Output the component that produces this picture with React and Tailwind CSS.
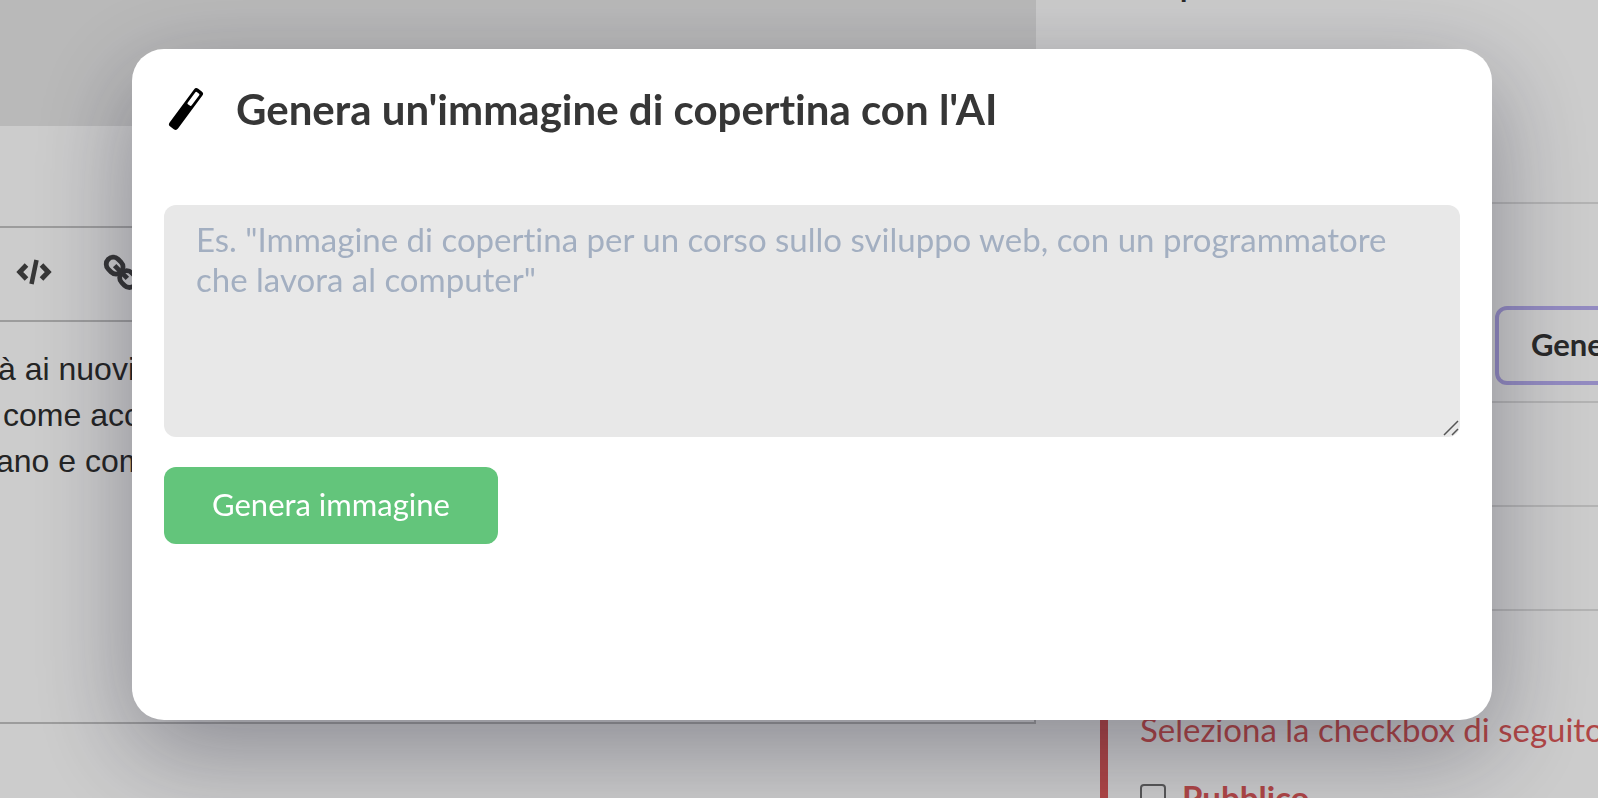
import React, { useState } from "react";

function WandIcon() {
  return (
    <svg width="44" height="48" viewBox="0 0 44 48" aria-hidden="true">
      <g transform="rotate(36.5 22 24)">
        <rect x="16.8" y="0.5" width="10.4" height="47" rx="3" fill="#000" />
        <rect x="19.6" y="4" width="4.8" height="15" rx="1" fill="#fff" />
      </g>
    </svg>
  );
}

function CodeIcon() {
  return (
    <svg width="36" height="36" viewBox="0 0 36 36" fill="none" stroke="#454545" strokeWidth="5">
      <path d="M10.5 11 3.8 18l6.7 7M25.500 11 32.200 18l-6.700 7" />
      <path d="M20.500 6 15.500 30" strokeWidth="4.500" />
    </svg>
  );
}

function LinkIcon() {
  return (
    <svg width="36" height="36" viewBox="0 0 36 36" fill="none" stroke="#454545" strokeWidth="4.8">
      <g transform="rotate(45 18 18)">
        <rect x="0" y="11" width="18" height="14" rx="7" />
        <rect x="19" y="11" width="18" height="14" rx="7" />
        <path d="M9 18h18" />
      </g>
    </svg>
  );
}

function Editor() {
  return (
    <div className="flex flex-col overflow-hidden">
      <div className="h-[126px] shrink-0 bg-[#e8e8e8]" />
      <div className="mt-[100px] flex h-24 shrink-0 items-center gap-[51px] border-2 border-l-0 border-[#c4c4c4] px-4 pb-1">
        <button type="button" aria-label="Codice"><CodeIcon /></button>
        <button type="button" aria-label="Link"><LinkIcon /></button>
      </div>
      <div className="h-[402px] shrink-0 border-r-2 border-b-2 border-[#c4c4c4] pt-6 font-['Liberation_Sans',sans-serif] text-[32px] leading-[46px] text-[#2e2e2e]">
        <p className="-ml-0.5">à ai nuovi</p>
        <p className="pl-[3px]">come acc</p>
        <p className="-ml-1">ano e com</p>
      </div>
    </div>
  );
}

function Sidebar() {
  return (
    <div className="flex flex-col overflow-hidden text-[#333]">
      <div className="h-[202px] shrink-0">
        <div className="flex h-0.5 items-end overflow-hidden pl-36 text-3xl font-bold">
          <span className="leading-7">p</span>
        </div>
      </div>
      <div className="flex h-[199px] shrink-0 items-end border-t-2 border-[#e0e0e0] pb-4 pl-[459px]">
        <button
          type="button"
          className="h-[79px] shrink-0 rounded-xl border-4 border-[#b8aef2] px-8 pb-0.5 text-[31px] font-bold whitespace-nowrap"
        >
          Genera
        </button>
      </div>
      <div className="h-[104px] shrink-0 border-t-2 border-[#e0e0e0]" />
      <div className="h-[104px] shrink-0 border-t-2 border-[#e0e0e0]" />
      <div className="h-16 shrink-0 border-t-2 border-[#e0e0e0]" />
      <div className="ml-16 shrink-0 border-l-8 border-[#dc5858] pt-[31px] pb-12 pl-8 text-[33px] leading-[50px] text-[#dc5858]">
        <p className="whitespace-nowrap">Seleziona la checkbox di seguito</p>
        <label className="mt-[18px] flex items-center gap-4 font-bold">
          <input
            type="checkbox"
            className="size-[26px] appearance-none rounded border-2 border-[#6e6e6e]"
          />
          Pubblico
        </label>
      </div>
    </div>
  );
}

function App() {
  const [prompt, setPrompt] = useState("");

  return (
    <div className="h-screen overflow-hidden bg-white font-['Lato',sans-serif] [font-variant-ligatures:none]">
      <div className="grid grid-cols-[1fr_562px]">
        <Editor />
        <Sidebar />
      </div>

      {/* Modal */}
      <div className="fixed inset-0 bg-black/20 pt-[49px] pr-[106px] pl-[132px]">
        <div
          role="dialog"
          aria-labelledby="cover-title"
          className="min-h-[671px] rounded-[32px] bg-white p-8 shadow-[0_30px_100px_rgba(18,18,38,0.36)]"
        >
          <div className="flex h-14 items-center gap-7">
            <WandIcon />
            <h2 id="cover-title" className="text-[42px] leading-[56px] font-bold text-[#363636]">
              Genera un'immagine di copertina con l'AI
            </h2>
          </div>
          <form className="mt-[68px]" onSubmit={(e) => e.preventDefault()}>
            <div className="relative">
              <textarea
                aria-label="Descrizione dell'immagine"
                value={prompt}
                onChange={(e) => setPrompt(e.target.value)}
                placeholder={'Es. "Immagine di copertina per un corso sullo sviluppo web, con un programmatore che lavora al computer"'}
                className="block h-[232px] w-full resize-none rounded-xl bg-[#e8e8e8] px-8 py-3.5 text-[33px] leading-10 text-[#363636] placeholder:text-[#a3afc1]"
              />
              <svg className="absolute right-0 bottom-0" width="18" height="18" viewBox="0 0 18 18" stroke="#555" strokeWidth="1.5">
                <path d="M2 16 16 2M10 16l6-6" />
              </svg>
            </div>
            <button
              type="submit"
              className="mt-[30px] h-[77px] rounded-xl bg-[#63c57b] px-12 pb-0.5 text-[31px] text-white"
            >
              Genera immagine
            </button>
          </form>
        </div>
      </div>
    </div>
  );
}

export default App;
